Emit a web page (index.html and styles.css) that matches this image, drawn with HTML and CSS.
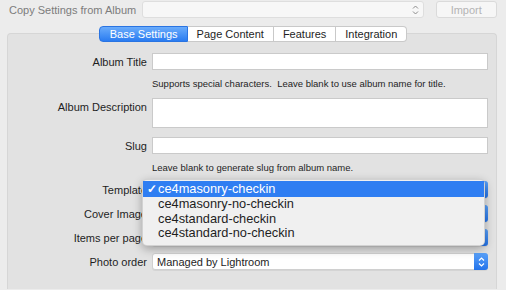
FILE: index.html
```html
<!DOCTYPE html>
<html lang="en">
<head>
<meta charset="UTF-8">
<meta name="viewport" content="width=device-width, initial-scale=1.0">
<title>Album Settings</title>
<link rel="stylesheet" href="styles.css">
</head>
<body>
<div class="top-row">
  <span class="top-label">Copy Settings from Album</span>
  <div class="top-select">
    <svg class="top-chevron" width="7" height="10" viewBox="0 0 7 10"><path d="M1 3.5 L3.5 1 L6 3.5 M1 6.5 L3.5 9 L6 6.5" fill="none" stroke="#8c8c8c" stroke-width="1"/></svg>
  </div>
  <button class="import-btn">Import</button>
</div>

<div class="tabs">
  <div class="tab active">Base Settings</div>
  <div class="tab">Page Content</div>
  <div class="tab">Features</div>
  <div class="tab last">Integration</div>
</div>

<div class="panel">
  <div class="row">
    <label>Album Title</label>
    <div class="field"></div>
  </div>
  <div class="help">Supports special characters.&nbsp; Leave blank to use album name for title.</div>
  <div class="row row-top">
    <label>Album Description</label>
    <div class="field area"></div>
  </div>
  <div class="row row-slug">
    <label>Slug</label>
    <div class="field"></div>
  </div>
  <div class="help">Leave blank to generate slug from album name.</div>
  <div class="row row-popup">
    <label>Template</label>
    <div class="popup"><span>ce4masonry-checkin</span><span class="popup-btn"><svg width="7" height="10" viewBox="0 0 7 10"><path d="M1 3.5 L3.5 1 L6 3.5 M1 6.5 L3.5 9 L6 6.5" fill="none" stroke="#fff" stroke-width="1.2"/></svg></span></div>
  </div>
  <div class="row row-popup">
    <label>Cover Image</label>
    <div class="popup"><span>First photo</span><span class="popup-btn"><svg width="7" height="10" viewBox="0 0 7 10"><path d="M1 3.5 L3.5 1 L6 3.5 M1 6.5 L3.5 9 L6 6.5" fill="none" stroke="#fff" stroke-width="1.2"/></svg></span></div>
  </div>
  <div class="row row-popup">
    <label>Items per page</label>
    <div class="popup"><span>20</span><span class="popup-btn"><svg width="7" height="10" viewBox="0 0 7 10"><path d="M1 3.5 L3.5 1 L6 3.5 M1 6.5 L3.5 9 L6 6.5" fill="none" stroke="#fff" stroke-width="1.2"/></svg></span></div>
  </div>
  <div class="row row-popup">
    <label>Photo order</label>
    <div class="popup"><span>Managed by Lightroom</span><span class="popup-btn"><svg width="7" height="10" viewBox="0 0 7 10"><path d="M1 3.5 L3.5 1 L6 3.5 M1 6.5 L3.5 9 L6 6.5" fill="none" stroke="#fff" stroke-width="1.2"/></svg></span></div>
  </div>

  <!-- open Template menu -->
  <div class="menu">
    <div class="menu-item selected"><span class="check">&#10003;</span>ce4masonry-checkin</div>
    <div class="menu-item">ce4masonry-no-checkin</div>
    <div class="menu-item">ce4standard-checkin</div>
    <div class="menu-item">ce4standard-no-checkin</div>
  </div>
</div>
</body>
</html>
```

FILE: styles.css
```css
body {
  font-family: "Liberation Sans", Arial, sans-serif;
  margin: 0;
  padding: 1px 0 0 0;
  background: #ececec;
  color: #1e1e1e;
  height: 289px;
  overflow: hidden;
}
.top-row {
  display: flex;
  align-items: center;
  height: 17px;
  padding: 0 9px;
}
.top-label {
  font-size: 11px;
  color: #7c7c7c;
  width: 134px;
}
.top-select {
  width: 278px;
  height: 15px;
  background: #f7f7f7;
  border: 1px solid #dedede;
  border-radius: 3px;
  display: flex;
  justify-content: flex-end;
  align-items: center;
  padding-right: 4px;
}
.top-select svg {
  display: block;
}
.import-btn {
  margin-left: 12px;
  width: 62px;
  height: 17px;
  background: #f6f6f6;
  border: 1px solid #dadada;
  border-radius: 3px;
  color: #b4b4b4;
  font-family: inherit;
  font-size: 11px;
  padding: 0;
}
.tabs {
  display: flex;
  justify-content: center;
  margin: 8px 0 -9px 0;
  position: relative;
  z-index: 1;
}
.tab {
  height: 14px;
  line-height: 14px;
  padding: 0 9px;
  font-size: 11px;
  background: #fff;
  border: 1px solid #c9c9c9;
  border-left: none;
  color: #1e1e1e;
}
.tab.active {
  background: linear-gradient(#6aacfb, #2a7cf1);
  border: 1px solid #2a74e2;
  color: #fff;
  border-radius: 4px 0 0 4px;
  padding: 0 9px 0 10px;
}
.tab.last {
  border-radius: 0 4px 4px 0;
}
.panel {
  position: relative;
  margin: 0 9px 0 7px;
  background: #e2e2e2;
  border: 1px solid #d6d6d6;
  border-bottom: none;
  border-radius: 4px 4px 0 0;
  padding: 19px 8px 19px 0;
}
.row {
  display: grid;
  grid-template-columns: 139px 1fr;
  column-gap: 5px;
  align-items: center;
}
.row label {
  text-align: right;
  font-size: 11px;
  white-space: nowrap;
}
.row-top {
  align-items: start;
  margin-top: 8px;
}
.row-top label {
  padding-top: 3px;
}
.row-slug {
  margin-top: 9px;
}
.row-popup {
  margin-top: 7px;
}
.field {
  height: 15px;
  background: #fff;
  border: 1px solid #cacaca;
}
.field.area {
  height: 28px;
}
.help {
  margin: 8px 0 0 144px;
  height: 12px;
  line-height: 12px;
  font-size: 9.5px;
  color: #1e1e1e;
}
.popup {
  height: 15px;
  background: #fff;
  border: 1px solid #d0d0d0;
  border-radius: 3px;
  box-shadow: 0 1px 0 rgba(0, 0, 0, 0.06);
  display: flex;
  justify-content: space-between;
  align-items: center;
  padding-left: 4px;
  font-size: 11px;
}
.popup-btn {
  width: 14px;
  height: 17px;
  margin-right: -1px;
  background: linear-gradient(#5aa2fa, #2373ea);
  border-radius: 0 3px 3px 0;
  display: flex;
  align-items: center;
  justify-content: center;
}
.menu {
  position: absolute;
  left: 134px;
  top: 145px;
  width: 341px;
  padding: 1px 0 4px 0;
  background: #f0f0f0;
  border: 1px solid rgba(0, 0, 0, 0.12);
  border-radius: 5px;
  box-shadow: 0 3px 10px rgba(0, 0, 0, 0.3);
  z-index: 2;
}
.menu-item {
  position: relative;
  height: 14.5px;
  line-height: 14.5px;
  padding-left: 15px;
  font-size: 12.8px;
  color: #1e1e1e;
}
.menu-item.selected {
  height: 16px;
  line-height: 16px;
  background: #2f7ef2;
  color: #fff;
}
.check {
  position: absolute;
  left: 4px;
  font-size: 12px;
  font-weight: bold;
}
```
